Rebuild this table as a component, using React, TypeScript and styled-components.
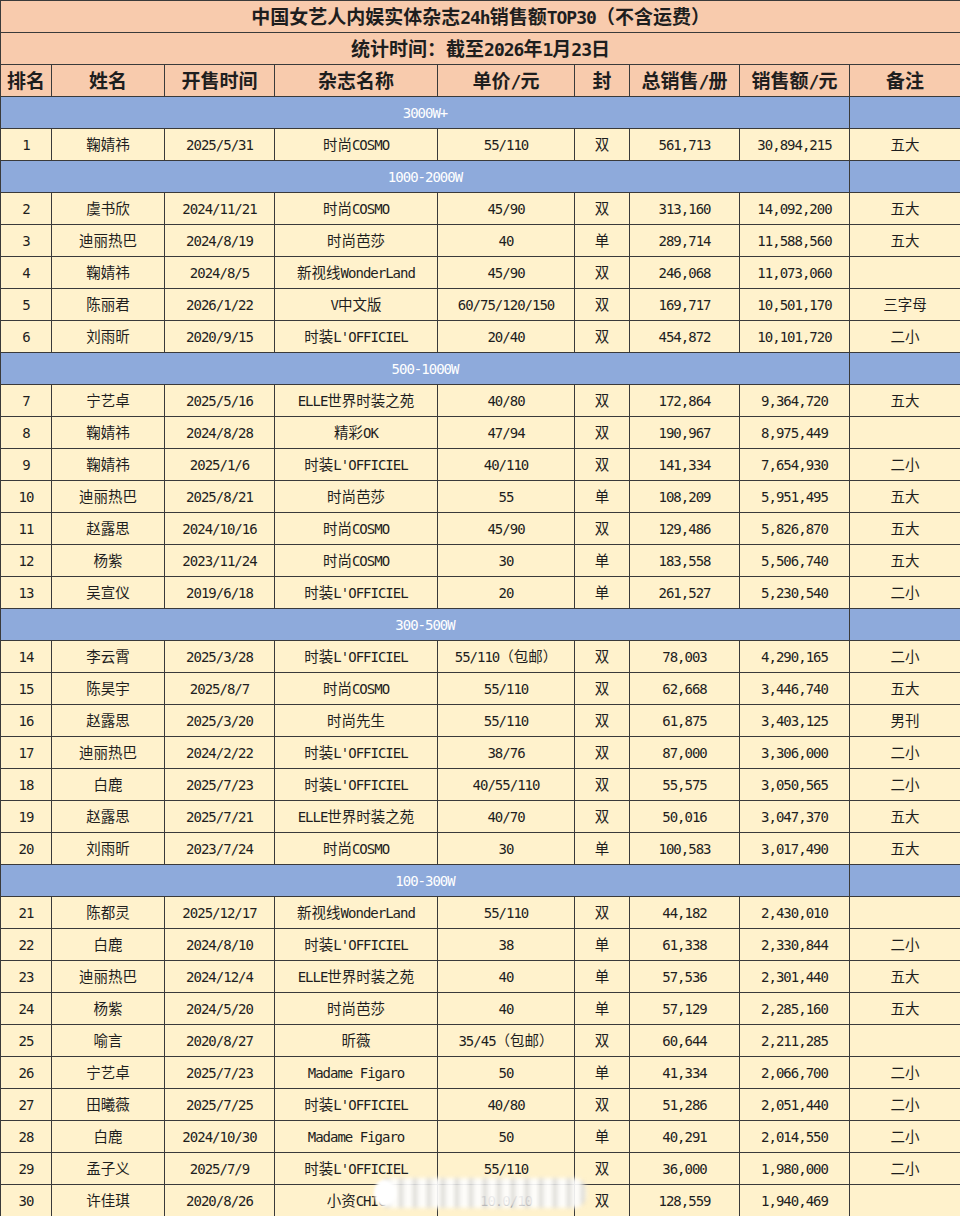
import React from "react";
import styled, { createGlobalStyle } from "styled-components";

const GlobalStyle = createGlobalStyle`
  html, body {
    margin: 0;
    padding: 0;
    background: #fff2cc;
  }
  body {
    font-family: "DejaVu Sans Mono", "Noto Sans CJK SC", monospace;
    color: #1e1e1e;
  }
`;

const COLS = [51, 113, 110, 163, 137, 55, 110, 110, 111];

const Sheet = styled.div`
  position: relative;
  width: 960px;
  height: 1216px;
  overflow: hidden;
`;

const Table = styled.table`
  width: 960px;
  border-collapse: collapse;
  table-layout: fixed;
`;

const Row = styled.tr`
  height: 32px;
`;

// $size: latin glyph size, $han: CJK glyph size
const Cell = styled.td<{ $tone?: "head" | "band" | "data"; $bold?: boolean; $size?: number; $han?: number }>`
  --han: ${(p) => p.$han ?? 14.5}px;
  border: 1px solid #3a3a3a;
  padding: 0;
  text-align: center;
  vertical-align: middle;
  white-space: nowrap;
  overflow: hidden;
  line-height: 1;
  font-size: ${(p) => p.$size ?? 14}px;
  letter-spacing: -1px;
  font-weight: ${(p) => (p.$bold ? 700 : 400)};
  background: ${(p) =>
    p.$tone === "head" ? "#f8cbad" : p.$tone === "band" ? "#8eaadb" : "#fff2cc"};
  color: ${(p) => (p.$tone === "band" ? "#ffffff" : "#1e1e1e")};
`;

const BandEdge = styled(Cell)`
  border-left-color: #22305a;
`;

const Han = styled.span`
  font-family: "Noto Sans CJK SC", sans-serif;
  font-size: var(--han);
  letter-spacing: 0;
`;

const Watermark = styled.div`
  position: absolute;
  left: 378px;
  top: 1178px;
  width: 208px;
  height: 30px;
  border-radius: 12px;
  background: repeating-linear-gradient(
    90deg,
    rgba(255, 255, 255, 0.92) 0 7px,
    rgba(205, 205, 205, 0.85) 7px 10px,
    rgba(245, 245, 245, 0.92) 10px 14px
  );
  filter: blur(2px);
`;

const WatermarkDot = styled.div`
  position: absolute;
  left: 374px;
  top: 1180px;
  width: 22px;
  height: 26px;
  border-radius: 50%;
  background: #ffffff;
  filter: blur(1.5px);
`;

function Mixed({ text }: { text: string }) {
  const parts = text.split(/([\u3000-\u9fff\uff00-\uffef]+)/).filter(Boolean);
  return (
    <>
      {parts.map((p, i) =>
        /[\u3000-\u9fff\uff00-\uffef]/.test(p) ? <Han key={i}>{p}</Han> : <span key={i}>{p}</span>
      )}
    </>
  );
}

type Item = [string, string, string, string, string, string, string, string, string];

const sections: { band: string; rows: Item[] }[] = [
  {
    band: "3000W+",
    rows: [["1", "鞠婧祎", "2025/5/31", "时尚COSMO", "55/110", "双", "561,713", "30,894,215", "五大"]],
  },
  {
    band: "1000-2000W",
    rows: [
      ["2", "虞书欣", "2024/11/21", "时尚COSMO", "45/90", "双", "313,160", "14,092,200", "五大"],
      ["3", "迪丽热巴", "2024/8/19", "时尚芭莎", "40", "单", "289,714", "11,588,560", "五大"],
      ["4", "鞠婧祎", "2024/8/5", "新视线WonderLand", "45/90", "双", "246,068", "11,073,060", ""],
      ["5", "陈丽君", "2026/1/22", "V中文版", "60/75/120/150", "双", "169,717", "10,501,170", "三字母"],
      ["6", "刘雨昕", "2020/9/15", "时装L'OFFICIEL", "20/40", "双", "454,872", "10,101,720", "二小"],
    ],
  },
  {
    band: "500-1000W",
    rows: [
      ["7", "宁艺卓", "2025/5/16", "ELLE世界时装之苑", "40/80", "双", "172,864", "9,364,720", "五大"],
      ["8", "鞠婧祎", "2024/8/28", "精彩OK", "47/94", "双", "190,967", "8,975,449", ""],
      ["9", "鞠婧祎", "2025/1/6", "时装L'OFFICIEL", "40/110", "双", "141,334", "7,654,930", "二小"],
      ["10", "迪丽热巴", "2025/8/21", "时尚芭莎", "55", "单", "108,209", "5,951,495", "五大"],
      ["11", "赵露思", "2024/10/16", "时尚COSMO", "45/90", "双", "129,486", "5,826,870", "五大"],
      ["12", "杨紫", "2023/11/24", "时尚COSMO", "30", "单", "183,558", "5,506,740", "五大"],
      ["13", "吴宣仪", "2019/6/18", "时装L'OFFICIEL", "20", "单", "261,527", "5,230,540", "二小"],
    ],
  },
  {
    band: "300-500W",
    rows: [
      ["14", "李云霄", "2025/3/28", "时装L'OFFICIEL", "55/110（包邮）", "双", "78,003", "4,290,165", "二小"],
      ["15", "陈昊宇", "2025/8/7", "时尚COSMO", "55/110", "双", "62,668", "3,446,740", "五大"],
      ["16", "赵露思", "2025/3/20", "时尚先生", "55/110", "双", "61,875", "3,403,125", "男刊"],
      ["17", "迪丽热巴", "2024/2/22", "时装L'OFFICIEL", "38/76", "双", "87,000", "3,306,000", "二小"],
      ["18", "白鹿", "2025/7/23", "时装L'OFFICIEL", "40/55/110", "双", "55,575", "3,050,565", "二小"],
      ["19", "赵露思", "2025/7/21", "ELLE世界时装之苑", "40/70", "双", "50,016", "3,047,370", "五大"],
      ["20", "刘雨昕", "2023/7/24", "时尚COSMO", "30", "单", "100,583", "3,017,490", "五大"],
    ],
  },
  {
    band: "100-300W",
    rows: [
      ["21", "陈都灵", "2025/12/17", "新视线WonderLand", "55/110", "双", "44,182", "2,430,010", ""],
      ["22", "白鹿", "2024/8/10", "时装L'OFFICIEL", "38", "单", "61,338", "2,330,844", "二小"],
      ["23", "迪丽热巴", "2024/12/4", "ELLE世界时装之苑", "40", "单", "57,536", "2,301,440", "五大"],
      ["24", "杨紫", "2024/5/20", "时尚芭莎", "40", "单", "57,129", "2,285,160", "五大"],
      ["25", "喻言", "2020/8/27", "昕薇", "35/45（包邮）", "双", "60,644", "2,211,285", ""],
      ["26", "宁艺卓", "2025/7/23", "Madame Figaro", "50", "单", "41,334", "2,066,700", "二小"],
      ["27", "田曦薇", "2025/7/25", "时装L'OFFICIEL", "40/80", "双", "51,286", "2,051,440", "二小"],
      ["28", "白鹿", "2024/10/30", "Madame Figaro", "50", "单", "40,291", "2,014,550", "二小"],
      ["29", "孟子义", "2025/7/9", "时装L'OFFICIEL", "55/110", "双", "36,000", "1,980,000", "二小"],
      ["30", "许佳琪", "2020/8/26", "小资CHIC", "10.0/10", "双", "128,559", "1,940,469", ""],
    ],
  },
];

const headers = ["排名", "姓名", "开售时间", "杂志名称", "单价/元", "封", "总销售/册", "销售额/元", "备注"];

export default function App() {
  return (
    <Sheet>
      <GlobalStyle />
      <Table>
        <colgroup>
          {COLS.map((w, i) => (
            <col key={i} style={{ width: w }} />
          ))}
        </colgroup>
        <tbody>
          <Row>
            <Cell colSpan={9} $tone="head" $bold $size={18} $han={19}>
              <Mixed text="中国女艺人内娱实体杂志24h销售额TOP30（不含运费）" />
            </Cell>
          </Row>
          <Row>
            <Cell colSpan={9} $tone="head" $bold $size={18} $han={19}>
              <Mixed text="统计时间：截至2026年1月23日" />
            </Cell>
          </Row>
          <Row>
            {headers.map((h) => (
              <Cell key={h} $tone="head" $bold $size={18} $han={19}>
                <Mixed text={h} />
              </Cell>
            ))}
          </Row>
          {sections.map((s) => (
            <React.Fragment key={s.band}>
              <Row>
                <Cell colSpan={8} $tone="band">
                  {s.band}
                </Cell>
                <BandEdge $tone="band" />
              </Row>
              {s.rows.map((r) => (
                <Row key={r[0]}>
                  {r.map((v, i) => (
                    <Cell key={i} $tone="data">
                      <Mixed text={v} />
                    </Cell>
                  ))}
                </Row>
              ))}
            </React.Fragment>
          ))}
        </tbody>
      </Table>
      <Watermark />
      <WatermarkDot />
    </Sheet>
  );
}
